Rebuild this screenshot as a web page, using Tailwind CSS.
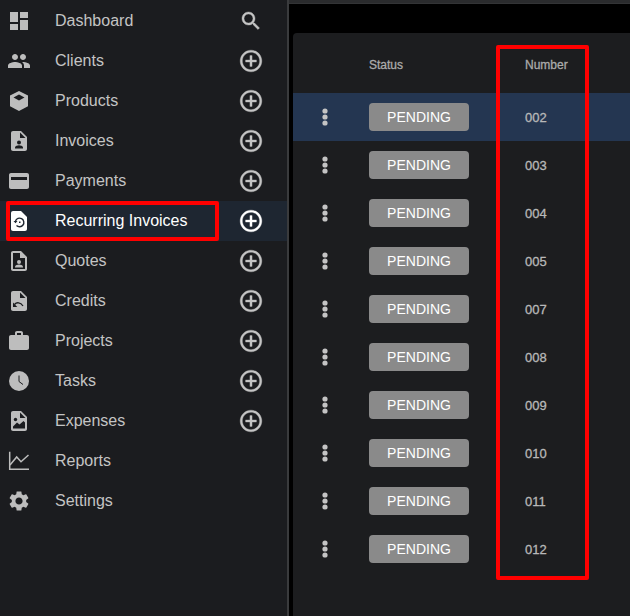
<!DOCTYPE html>
<html lang="en">
<head>
  <meta charset="utf-8"/>
  <title>Recurring Invoices</title>
  <script src="https://cdn.jsdelivr.net/npm/@tailwindcss/browser@4"></script>
</head>
<body class="relative w-[630px] h-[616px] overflow-hidden bg-black font-['Liberation_Sans',Arial,sans-serif] flex">
  <!-- sidebar -->
  <aside class="w-[287px] h-full shrink-0 pt-px bg-[#1b1c1f] text-[16px] text-[#c4c4c4]">
    <div class="flex items-center h-10 pl-[7px]">
      <svg class="w-6 h-6 fill-[#bdbdbd]" viewBox="0 0 24 24"><path d="M3 13h8V3H3v10zm0 8h8v-6H3v6zm10 0h8V11h-8v10zm0-18v6h8V3h-8z"/></svg>
      <span class="ml-6 flex-1">Dashboard</span>
      <svg class="w-6 h-6 mr-6 fill-[#c4c4c4] stroke-[#c4c4c4] stroke-[0.4]" viewBox="0 0 24 24"><path d="M15.5 14h-.79l-.28-.27C15.41 12.59 16 11.11 16 9.5 16 5.91 13.09 3 9.5 3S3 5.91 3 9.5 5.91 16 9.5 16c1.61 0 3.09-.59 4.23-1.57l.27.28v.79l5 4.99L20.49 19l-4.99-5zm-6 0C7.01 14 5 11.99 5 9.5S7.01 5 9.5 5 14 7.01 14 9.5 11.99 14 9.5 14z"/></svg>
    </div>
    <div class="flex items-center h-10 pl-[7px]">
      <svg class="w-6 h-6 fill-[#bdbdbd]" viewBox="0 0 24 24"><path d="M16 11c1.66 0 2.99-1.34 2.99-3S17.66 5 16 5c-1.66 0-3 1.34-3 3s1.34 3 3 3zm-8 0c1.66 0 2.99-1.34 2.99-3S9.66 5 8 5C6.34 5 5 6.34 5 8s1.34 3 3 3zm0 2c-2.33 0-7 1.17-7 3.5V19h14v-2.5c0-2.33-4.67-3.5-7-3.5zm8 0c-.29 0-.62.02-.97.05 1.16.84 1.97 1.97 1.97 3.45V19h6v-2.5c0-2.33-4.67-3.5-7-3.5z"/></svg>
      <span class="ml-6 flex-1">Clients</span>
      <svg class="w-[26px] h-[26px] mr-[23px] fill-[#c4c4c4] stroke-[#c4c4c4] stroke-[0.3]" viewBox="0 0 24 24"><path d="M13 7h-2v4H7v2h4v4h2v-4h4v-2h-4V7zm-1-5C6.48 2 2 6.48 2 12s4.48 10 10 10 10-4.48 10-10S17.52 2 12 2zm0 18c-4.41 0-8-3.59-8-8s3.59-8 8-8 8 3.59 8 8-3.59 8-8 8z"/></svg>
    </div>
    <div class="flex items-center h-10 pl-[7px]">
      <svg class="w-6 h-6" viewBox="0 0 24 24"><path fill="#bdbdbd" d="M12 2l9 4.6v10.6L12 22l-9-4.8V6.600z"/><path fill="#1b1c1f" d="M12 5.500l5.500 3-5.500 3-5.500-3z"/></svg>
      <span class="ml-6 flex-1">Products</span>
      <svg class="w-[26px] h-[26px] mr-[23px] fill-[#c4c4c4] stroke-[#c4c4c4] stroke-[0.3]" viewBox="0 0 24 24"><path d="M13 7h-2v4H7v2h4v4h2v-4h4v-2h-4V7zm-1-5C6.48 2 2 6.48 2 12s4.48 10 10 10 10-4.48 10-10S17.52 2 12 2zm0 18c-4.41 0-8-3.59-8-8s3.59-8 8-8 8 3.59 8 8-3.59 8-8 8z"/></svg>
    </div>
    <div class="flex items-center h-10 pl-[7px]">
      <svg class="w-6 h-6" viewBox="0 0 24 24"><path fill="#bdbdbd" d="M14 2H6c-1.100 0-2 .9-2 2v16c0 1.100.9 2 2 2h12c1.100 0 2-.9 2-2V8z"/><path fill="#1b1c1f" d="M13 3.500L18.500 9H13z"/><circle fill="#1b1c1f" cx="12" cy="13.500" r="2"/><path fill="#1b1c1f" d="M8 19.500v-1.200c0-1.300 2.700-2 4-2s4 .7 4 2v1.200z"/></svg>
      <span class="ml-6 flex-1">Invoices</span>
      <svg class="w-[26px] h-[26px] mr-[23px] fill-[#c4c4c4] stroke-[#c4c4c4] stroke-[0.3]" viewBox="0 0 24 24"><path d="M13 7h-2v4H7v2h4v4h2v-4h4v-2h-4V7zm-1-5C6.48 2 2 6.48 2 12s4.48 10 10 10 10-4.48 10-10S17.52 2 12 2zm0 18c-4.41 0-8-3.59-8-8s3.59-8 8-8 8 3.59 8 8-3.59 8-8 8z"/></svg>
    </div>
    <div class="flex items-center h-10 pl-[7px]">
      <svg class="w-6 h-6" viewBox="0 0 24 24"><path fill="#bdbdbd" d="M20 4H4c-1.110 0-1.990.89-1.990 2L2 18c0 1.110.89 2 2 2h16c1.110 0 2-.89 2-2V6c0-1.110-.89-2-2-2z"/><path fill="#1b1c1f" d="M4 8h16v3H4z"/></svg>
      <span class="ml-6 flex-1">Payments</span>
      <svg class="w-[26px] h-[26px] mr-[23px] fill-[#c4c4c4] stroke-[#c4c4c4] stroke-[0.3]" viewBox="0 0 24 24"><path d="M13 7h-2v4H7v2h4v4h2v-4h4v-2h-4V7zm-1-5C6.48 2 2 6.48 2 12s4.48 10 10 10 10-4.48 10-10S17.52 2 12 2zm0 18c-4.41 0-8-3.59-8-8s3.59-8 8-8 8 3.59 8 8-3.59 8-8 8z"/></svg>
    </div>
    <div class="flex items-center h-10 pl-[7px] bg-[#1e2631] text-white">
      <svg class="w-6 h-6" viewBox="0 0 24 24"><path fill="#ffffff" d="M14 2H6c-1.100 0-2 .9-2 2v16c0 1.100.9 2 2 2h12c1.100 0 2-.9 2-2V8z"/><path fill="none" stroke="#1e2631" stroke-width="1.400" d="M8.500 12a4.300 4.300 0 1 1 1 4.500"/><path fill="#1e2631" d="M6.500 12h4l-2 2.300zM12 12.500h1.500V14H12z"/></svg>
      <span class="ml-6 flex-1">Recurring Invoices</span>
      <svg class="w-[26px] h-[26px] mr-[23px] fill-white stroke-white stroke-[0.3]" viewBox="0 0 24 24"><path d="M13 7h-2v4H7v2h4v4h2v-4h4v-2h-4V7zm-1-5C6.48 2 2 6.48 2 12s4.48 10 10 10 10-4.48 10-10S17.52 2 12 2zm0 18c-4.41 0-8-3.59-8-8s3.59-8 8-8 8 3.59 8 8-3.59 8-8 8z"/></svg>
    </div>
    <div class="flex items-center h-10 pl-[7px]">
      <svg class="w-6 h-6" viewBox="0 0 24 24"><path fill="#bdbdbd" fill-rule="evenodd" d="M6 2h8l6 6v12c0 1.100-.9 2-2 2H6c-1.100 0-2-.9-2-2V4c0-1.100.9-2 2-2zm0 2v16h12V9h-5V4z"/><circle fill="#bdbdbd" cx="12" cy="13" r="2"/><path fill="#bdbdbd" d="M8 18.500v-1c0-1.300 2.700-2 4-2s4 .7 4 2v1z"/></svg>
      <span class="ml-6 flex-1">Quotes</span>
      <svg class="w-[26px] h-[26px] mr-[23px] fill-[#c4c4c4] stroke-[#c4c4c4] stroke-[0.3]" viewBox="0 0 24 24"><path d="M13 7h-2v4H7v2h4v4h2v-4h4v-2h-4V7zm-1-5C6.48 2 2 6.48 2 12s4.48 10 10 10 10-4.48 10-10S17.52 2 12 2zm0 18c-4.41 0-8-3.59-8-8s3.59-8 8-8 8 3.59 8 8-3.59 8-8 8z"/></svg>
    </div>
    <div class="flex items-center h-10 pl-[7px]">
      <svg class="w-6 h-6" viewBox="0 0 24 24"><path fill="#bdbdbd" d="M14 2H6c-1.100 0-2 .9-2 2v16c0 1.100.9 2 2 2h12c1.100 0 2-.9 2-2V8z"/><path fill="#1b1c1f" d="M13 3.500L18.500 9H13z"/><path fill="none" stroke="#1b1c1f" stroke-width="1.300" d="M7.500 15.500c2-2.500 6-2.500 8.500 1.500"/><path fill="#1b1c1f" d="M6 13.500v4.500h4.300z"/></svg>
      <span class="ml-6 flex-1">Credits</span>
      <svg class="w-[26px] h-[26px] mr-[23px] fill-[#c4c4c4] stroke-[#c4c4c4] stroke-[0.3]" viewBox="0 0 24 24"><path d="M13 7h-2v4H7v2h4v4h2v-4h4v-2h-4V7zm-1-5C6.48 2 2 6.48 2 12s4.48 10 10 10 10-4.48 10-10S17.52 2 12 2zm0 18c-4.41 0-8-3.59-8-8s3.59-8 8-8 8 3.59 8 8-3.59 8-8 8z"/></svg>
    </div>
    <div class="flex items-center h-10 pl-[7px]">
      <svg class="w-6 h-6 fill-[#bdbdbd]" viewBox="0 0 24 24"><path d="M20 6h-4V4c0-1.110-.89-2-2-2h-4c-1.110 0-2 .89-2 2v2H4c-1.110 0-1.990.89-1.990 2L2 19c0 1.110.89 2 2 2h16c1.110 0 2-.89 2-2V8c0-1.110-.89-2-2-2zm-6 0h-4V4h4v2z"/></svg>
      <span class="ml-6 flex-1">Projects</span>
      <svg class="w-[26px] h-[26px] mr-[23px] fill-[#c4c4c4] stroke-[#c4c4c4] stroke-[0.3]" viewBox="0 0 24 24"><path d="M13 7h-2v4H7v2h4v4h2v-4h4v-2h-4V7zm-1-5C6.48 2 2 6.48 2 12s4.48 10 10 10 10-4.48 10-10S17.52 2 12 2zm0 18c-4.41 0-8-3.59-8-8s3.59-8 8-8 8 3.59 8 8-3.59 8-8 8z"/></svg>
    </div>
    <div class="flex items-center h-10 pl-[7px]">
      <svg class="w-6 h-6" viewBox="0 0 24 24"><circle fill="#bdbdbd" cx="12" cy="12" r="10"/><path fill="none" stroke="#1b1c1f" stroke-width="1" d="M12 6.500V12.500l4 3"/></svg>
      <span class="ml-6 flex-1">Tasks</span>
      <svg class="w-[26px] h-[26px] mr-[23px] fill-[#c4c4c4] stroke-[#c4c4c4] stroke-[0.3]" viewBox="0 0 24 24"><path d="M13 7h-2v4H7v2h4v4h2v-4h4v-2h-4V7zm-1-5C6.48 2 2 6.48 2 12s4.48 10 10 10 10-4.48 10-10S17.52 2 12 2zm0 18c-4.41 0-8-3.59-8-8s3.59-8 8-8 8 3.59 8 8-3.59 8-8 8z"/></svg>
    </div>
    <div class="flex items-center h-10 pl-[7px]">
      <svg class="w-6 h-6" viewBox="0 0 24 24"><path fill="#bdbdbd" d="M14 2H6c-1.100 0-2 .9-2 2v16c0 1.100.9 2 2 2h12c1.100 0 2-.9 2-2V8z"/><path fill="#1b1c1f" d="M13 3.500L18.500 9H13z"/><circle fill="#1b1c1f" cx="8.500" cy="10.500" r="1.700"/><path fill="#1b1c1f" d="M6 19.500v-2l4-4 2.500 2 4-3.500 1.500 1.500v6z"/></svg>
      <span class="ml-6 flex-1">Expenses</span>
      <svg class="w-[26px] h-[26px] mr-[23px] fill-[#c4c4c4] stroke-[#c4c4c4] stroke-[0.3]" viewBox="0 0 24 24"><path d="M13 7h-2v4H7v2h4v4h2v-4h4v-2h-4V7zm-1-5C6.48 2 2 6.48 2 12s4.48 10 10 10 10-4.48 10-10S17.52 2 12 2zm0 18c-4.41 0-8-3.59-8-8s3.59-8 8-8 8 3.59 8 8-3.59 8-8 8z"/></svg>
    </div>
    <div class="flex items-center h-10 pl-[7px]">
      <svg class="w-6 h-6" viewBox="0 0 24 24"><path fill="none" stroke="#bdbdbd" stroke-width="1.500" d="M2.700 2.700V20.300h19.300"/><path fill="none" stroke="#bdbdbd" stroke-width="1.500" d="M3 16l6.700-8 4.300 4.700L21.500 6"/></svg>
      <span class="ml-6 flex-1">Reports</span>
    </div>
    <div class="flex items-center h-10 pl-[7px]">
      <svg class="w-6 h-6 fill-[#bdbdbd]" viewBox="0 0 24 24"><path d="M19.140 12.940c.04-.3.06-.61.06-.94 0-.32-.02-.64-.07-.94l2.030-1.580c.18-.14.23-.41.12-.61l-1.920-3.320c-.12-.22-.37-.29-.59-.22l-2.390.96c-.5-.38-1.030-.7-1.620-.94l-.36-2.540c-.04-.24-.24-.41-.48-.41h-3.840c-.24 0-.43.17-.47.41l-.36 2.540c-.59.24-1.130.57-1.620.94l-2.390-.96c-.22-.08-.47 0-.59.22L2.740 8.870c-.12.21-.08.47.12.61l2.030 1.580c-.05.3-.09.63-.09.94s.02.64.07.94l-2.030 1.580c-.18.14-.23.41-.12.61l1.920 3.320c.12.22.37.29.59.22l2.390-.96c.5.38 1.030.7 1.620.94l.36 2.540c.05.24.24.41.48.41h3.840c.24 0 .44-.17.47-.41l.36-2.540c.59-.24 1.130-.56 1.620-.94l2.390.96c.22.08.47 0 .59-.22l1.920-3.320c.12-.22.07-.47-.12-.61l-2.010-1.580zM12 15.600c-1.980 0-3.600-1.620-3.600-3.600s1.620-3.600 3.600-3.600 3.600 1.620 3.600 3.600-1.620 3.600-3.600 3.600z"/></svg>
      <span class="ml-6 flex-1">Settings</span>
    </div>
  </aside>
  <div class="w-[2px] h-full shrink-0 bg-[#3a3b3d]"></div>

  <!-- main -->
  <main class="flex-1 h-full flex flex-col min-w-0">
    <div class="h-1 shrink-0 bg-[#2a2b2d] border-b border-[#333436]"></div>
    <div class="flex-1 pl-1 pt-[29px]">
      <div class="h-full bg-[#1c1d1f] rounded-tl text-[#b8b8b8]">
        <div class="flex items-center h-[60px] pt-1 text-xs text-[#ababab] [-webkit-text-stroke:0.3px]">
          <span class="ml-[76px] w-[156px]">Status</span>
          <span>Number</span>
        </div>
        <div class="flex items-center h-12 bg-[#243651]">
          <svg class="w-6 h-6 ml-5 mr-8 fill-[#c4c4c4]" viewBox="0 0 24 24"><circle cx="12" cy="6" r="2.600"/><circle cx="12" cy="12" r="2.600"/><circle cx="12" cy="18" r="2.600"/></svg>
          <span class="flex items-center justify-center w-[100px] h-7 mr-14 rounded bg-[#8a8a8a] text-sm text-white">PENDING</span>
          <span class="pt-0.5 text-[13px] [-webkit-text-stroke:0.3px]">002</span>
        </div>
        <div class="flex items-center h-12">
          <svg class="w-6 h-6 ml-5 mr-8 fill-[#c4c4c4]" viewBox="0 0 24 24"><circle cx="12" cy="6" r="2.600"/><circle cx="12" cy="12" r="2.600"/><circle cx="12" cy="18" r="2.600"/></svg>
          <span class="flex items-center justify-center w-[100px] h-7 mr-14 rounded bg-[#8a8a8a] text-sm text-white">PENDING</span>
          <span class="pt-0.5 text-[13px] [-webkit-text-stroke:0.3px]">003</span>
        </div>
        <div class="flex items-center h-12">
          <svg class="w-6 h-6 ml-5 mr-8 fill-[#c4c4c4]" viewBox="0 0 24 24"><circle cx="12" cy="6" r="2.600"/><circle cx="12" cy="12" r="2.600"/><circle cx="12" cy="18" r="2.600"/></svg>
          <span class="flex items-center justify-center w-[100px] h-7 mr-14 rounded bg-[#8a8a8a] text-sm text-white">PENDING</span>
          <span class="pt-0.5 text-[13px] [-webkit-text-stroke:0.3px]">004</span>
        </div>
        <div class="flex items-center h-12">
          <svg class="w-6 h-6 ml-5 mr-8 fill-[#c4c4c4]" viewBox="0 0 24 24"><circle cx="12" cy="6" r="2.600"/><circle cx="12" cy="12" r="2.600"/><circle cx="12" cy="18" r="2.600"/></svg>
          <span class="flex items-center justify-center w-[100px] h-7 mr-14 rounded bg-[#8a8a8a] text-sm text-white">PENDING</span>
          <span class="pt-0.5 text-[13px] [-webkit-text-stroke:0.3px]">005</span>
        </div>
        <div class="flex items-center h-12">
          <svg class="w-6 h-6 ml-5 mr-8 fill-[#c4c4c4]" viewBox="0 0 24 24"><circle cx="12" cy="6" r="2.600"/><circle cx="12" cy="12" r="2.600"/><circle cx="12" cy="18" r="2.600"/></svg>
          <span class="flex items-center justify-center w-[100px] h-7 mr-14 rounded bg-[#8a8a8a] text-sm text-white">PENDING</span>
          <span class="pt-0.5 text-[13px] [-webkit-text-stroke:0.3px]">007</span>
        </div>
        <div class="flex items-center h-12">
          <svg class="w-6 h-6 ml-5 mr-8 fill-[#c4c4c4]" viewBox="0 0 24 24"><circle cx="12" cy="6" r="2.600"/><circle cx="12" cy="12" r="2.600"/><circle cx="12" cy="18" r="2.600"/></svg>
          <span class="flex items-center justify-center w-[100px] h-7 mr-14 rounded bg-[#8a8a8a] text-sm text-white">PENDING</span>
          <span class="pt-0.5 text-[13px] [-webkit-text-stroke:0.3px]">008</span>
        </div>
        <div class="flex items-center h-12">
          <svg class="w-6 h-6 ml-5 mr-8 fill-[#c4c4c4]" viewBox="0 0 24 24"><circle cx="12" cy="6" r="2.600"/><circle cx="12" cy="12" r="2.600"/><circle cx="12" cy="18" r="2.600"/></svg>
          <span class="flex items-center justify-center w-[100px] h-7 mr-14 rounded bg-[#8a8a8a] text-sm text-white">PENDING</span>
          <span class="pt-0.5 text-[13px] [-webkit-text-stroke:0.3px]">009</span>
        </div>
        <div class="flex items-center h-12">
          <svg class="w-6 h-6 ml-5 mr-8 fill-[#c4c4c4]" viewBox="0 0 24 24"><circle cx="12" cy="6" r="2.600"/><circle cx="12" cy="12" r="2.600"/><circle cx="12" cy="18" r="2.600"/></svg>
          <span class="flex items-center justify-center w-[100px] h-7 mr-14 rounded bg-[#8a8a8a] text-sm text-white">PENDING</span>
          <span class="pt-0.5 text-[13px] [-webkit-text-stroke:0.3px]">010</span>
        </div>
        <div class="flex items-center h-12">
          <svg class="w-6 h-6 ml-5 mr-8 fill-[#c4c4c4]" viewBox="0 0 24 24"><circle cx="12" cy="6" r="2.600"/><circle cx="12" cy="12" r="2.600"/><circle cx="12" cy="18" r="2.600"/></svg>
          <span class="flex items-center justify-center w-[100px] h-7 mr-14 rounded bg-[#8a8a8a] text-sm text-white">PENDING</span>
          <span class="pt-0.5 text-[13px] [-webkit-text-stroke:0.3px]">011</span>
        </div>
        <div class="flex items-center h-12">
          <svg class="w-6 h-6 ml-5 mr-8 fill-[#c4c4c4]" viewBox="0 0 24 24"><circle cx="12" cy="6" r="2.600"/><circle cx="12" cy="12" r="2.600"/><circle cx="12" cy="18" r="2.600"/></svg>
          <span class="flex items-center justify-center w-[100px] h-7 mr-14 rounded bg-[#8a8a8a] text-sm text-white">PENDING</span>
          <span class="pt-0.5 text-[13px] [-webkit-text-stroke:0.3px]">012</span>
        </div>
      </div>
    </div>
  </main>

  <!-- red annotation boxes drawn over the screenshot -->
  <div class="absolute left-[6px] top-[201px] w-[213px] h-10 border-4 border-[#ff0000] rounded-[2px]"></div>
  <div class="absolute left-[496px] top-[45px] w-[93px] h-[535px] border-4 border-[#ff0000] rounded-[2px]"></div>
</body>
</html>
